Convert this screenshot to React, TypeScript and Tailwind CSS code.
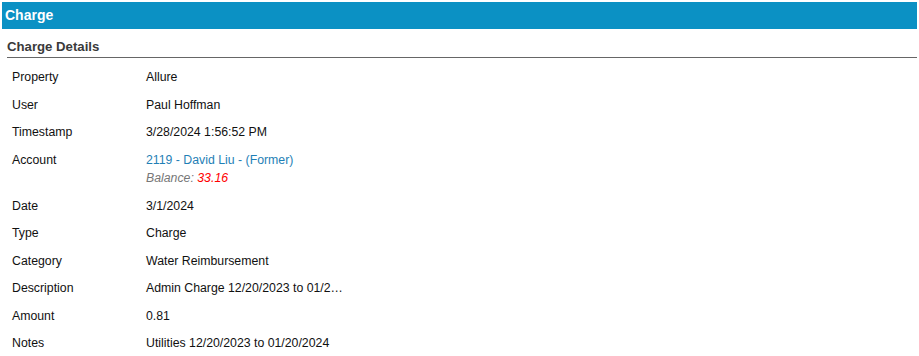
export default function App() {
  const rows: { label: string; value: React.ReactNode; extra?: boolean }[] = [
    { label: "Property", value: "Allure" },
    { label: "User", value: "Paul Hoffman" },
    { label: "Timestamp", value: "3/28/2024 1:56:52 PM" },
    {
      label: "Account",
      extra: true,
      value: (
        <div className="leading-[18px]">
          <a href="#" className="text-[#1f7fb6]">
            2119 - David Liu - (Former)
          </a>
          <div className="italic text-[#777]">
            Balance: <span className="text-[#f00]">33.16</span>
          </div>
        </div>
      ),
    },
    { label: "Date", value: "3/1/2024" },
    { label: "Type", value: "Charge" },
    { label: "Category", value: "Water Reimbursement" },
    { label: "Description", value: "Admin Charge 12/20/2023 to 01/2…" },
    { label: "Amount", value: "0.81" },
    { label: "Notes", value: "Utilities 12/20/2023 to 01/20/2024" },
  ];

  return (
    <div className="min-h-screen bg-white p-[2px] font-['Liberation_Sans',Arial,sans-serif] text-[12.3px] text-[#111]">
      <div className="h-[27px] bg-[#0b91c4] pl-[3px] text-[14px] font-bold leading-[27px] text-white">
        Charge
      </div>
      <div className="ml-[5px]">
        <div className="mt-[10px] border-b border-[#666] pb-[2px] text-[13.2px] font-bold leading-[16px] text-[#3a3a3a]">
          Charge Details
        </div>
        <div className="mt-[6px]">
          {rows.map((r) => (
            <div
              key={r.label}
              className={`flex px-[5px] leading-[17.5px] ${r.extra ? "pt-[4px] pb-[6px]" : "py-[5px]"}`}
            >
              <div className={`w-[134px] shrink-0 ${r.extra ? "leading-[18px]" : ""}`}>{r.label}</div>
              <div>{r.value}</div>
            </div>
          ))}
        </div>
      </div>
    </div>
  );
}
